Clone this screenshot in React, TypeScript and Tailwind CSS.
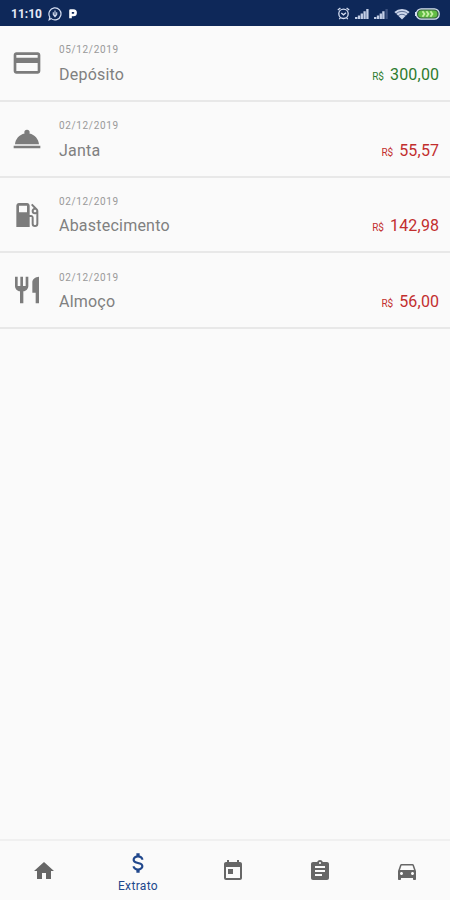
import type { ReactNode } from 'react';
import {
  MdAssignment,
  MdCreditCard,
  MdDirectionsCar,
  MdHome,
  MdLocalGasStation,
  MdRestaurant,
  MdToday,
} from 'react-icons/md';

type Entry = { date: string; label: string; amount: string; income?: boolean; icon: ReactNode };

function Cloche() {
  return (
    <svg width="32" height="32" viewBox="0 0 24 24" fill="currentColor">
      <path d="M2 17h20v2H2v-2M13.84 7.79A2 2 0 0 0 14 7a2 2 0 0 0-4 0c0 .28.06.55.16.79C6.25 8.6 3.27 11.93 3 16h18c-.27-4.07-3.25-7.4-7.16-8.21Z" />
    </svg>
  );
}

function Dollar() {
  return (
    <svg width="26" height="26" viewBox="0 0 24 24" fill="currentColor">
      <path d="M7 15h2c0 1.08 1.37 2 3 2s3-.92 3-2c0-1.1-1.04-1.5-3.24-2.03C9.64 12.44 7 11.78 7 9c0-1.79 1.47-3.31 3.5-3.82V3h3v2.18C15.53 5.69 17 7.21 17 9h-2c0-1.08-1.37-2-3-2s-3 .92-3 2c0 1.1 1.04 1.5 3.24 2.03C14.36 11.56 17 12.22 17 15c0 1.79-1.47 3.31-3.5 3.82V21h-3v-2.18C8.47 18.31 7 16.79 7 15Z" />
    </svg>
  );
}

const entries: Entry[] = [
  { date: '05/12/2019', label: 'Depósito', amount: '300,00', income: true, icon: <MdCreditCard size={32} /> },
  { date: '02/12/2019', label: 'Janta', amount: '55,57', icon: <Cloche /> },
  { date: '02/12/2019', label: 'Abastecimento', amount: '142,98', icon: <MdLocalGasStation size={32} /> },
  { date: '02/12/2019', label: 'Almoço', amount: '56,00', icon: <MdRestaurant size={32} /> },
];

function Signal({ solid, faint }: { solid: string; faint?: string }) {
  return (
    <svg width="14" height="11" viewBox="0 0 14 11" fill="none" strokeWidth="2.3">
      <path d={solid} stroke="#c3cee6" />
      {faint && <path d={faint} stroke="#3d5280" />}
    </svg>
  );
}

function StatusBar() {
  return (
    <header className="flex h-[26px] shrink-0 items-center bg-[#0e2859] pt-px pr-[10px] pl-[11px] text-[#e3e9f6]">
      <span className="w-[32px] text-[12px] leading-none font-bold">11:10</span>
      <svg className="ml-[5px]" width="14" height="14" viewBox="0 0 14 14" fill="none" stroke="#d5def2" strokeWidth="1.2">
        <path d="M3.2 11.6 1.2 12.8 1.8 10A6 6 0 1 1 3.2 11.6Z" />
        <path d="M7 3.5v6M5.3 5.2v2.4L7 9.6l1.7-2V5.2" strokeWidth="1.1" />
      </svg>
      <svg className="ml-[6px]" width="10" height="12" viewBox="0 0 10 12">
        <path d="M2.5 10.3V2.6h2.9a2 2 0 0 1 0 4.4H2.5" fill="none" stroke="#fff" strokeWidth="2.6" strokeLinejoin="round" />
      </svg>
      <div className="ml-auto flex items-center">
        <svg width="13" height="13" viewBox="0 0 13 13" fill="none" stroke="#d5def2" strokeWidth="1.3">
          <circle cx="6.5" cy="6.8" r="4.7" />
          <path d="M.8 3 3.4 1M12.2 3 9.6 1M4.3 6l2.2 1.8L9 5.8M3.3 10.8l-1 1.4M9.7 10.8l1 1.4" />
        </svg>
        <div className="ml-[5px]"><Signal solid="M1.2 11V9M4 11V7.4M6.8 11V5.4M9.6 11V3.2M12.4 11V1" /></div>
        <div className="ml-[5px]"><Signal solid="M1.2 11V9M4 11V7.4M6.8 11V5.4M9.4 11V3.2" faint="M12.6 11V1" /></div>
        <svg className="ml-[6px]" width="16" height="12" viewBox="0 0 16 12">
          <path d="M.4 4.1a11 11 0 0 1 15.2 0L8 11.6Z" fill="#cdd7ec" />
          <path d="M2 5.7a8.8 8.8 0 0 1 12 0M4.2 7.8a5.5 5.5 0 0 1 7.6 0" fill="none" stroke="#0e2859" strokeWidth=".6" />
        </svg>
        <svg className="ml-[5px]" width="25" height="12" viewBox="0 0 25 12">
          <rect x="1.4" y=".8" width="22.8" height="10.4" rx="4.8" fill="#35633e" stroke="#d5def2" strokeWidth="1.2" />
          <path d="M.5 4v4" stroke="#d5def2" />
          <rect x="3.2" y="2.5" width="19" height="7" rx="3.3" fill="#63bd45" />
          <path d="m7.5 3.2 2 2.8-2 2.8M11.5 3.2l2 2.8-2 2.8M15.5 3.2l2 2.8-2 2.8" fill="none" stroke="#c8f0a8" strokeWidth="1.7" />
        </svg>
      </div>
    </header>
  );
}

function Row({ entry }: { entry: Entry }) {
  return (
    <li className="flex h-[75.75px] border-b-2 border-[#e8e8e8] pr-[11px] pl-[11px]">
      <div className="mt-[21px] h-8 w-8 shrink-0 text-[#7c7c7c]">{entry.icon}</div>
      <div className="ml-[16px] flex-1">
        <div className="mt-[18.4px] text-[10px] leading-[12px] tracking-[0.65px] text-[#999]">{entry.date}</div>
        <div className="mt-[8.4px] flex items-baseline justify-between leading-[20px]">
          <span className="text-[16px] tracking-[0.22px] text-[#808080]">{entry.label}</span>
          <span className={`flex items-baseline gap-[6px] ${entry.income ? 'text-[#2d7b2e]' : 'text-[#c22e2e]'}`}>
            <span className="text-[10px]">R$</span>
            <span className="-mr-[0.3px] text-[16px] tracking-[0.2px]">{entry.amount}</span>
          </span>
        </div>
      </div>
    </li>
  );
}

export default function App() {
  return (
    <div className="flex h-[900px] w-[450px] flex-col overflow-hidden bg-[#fafafa] font-['Roboto',sans-serif]">
      <StatusBar />
      <ul className="flex-1">
        {entries.map((entry) => (
          <Row key={entry.label} entry={entry} />
        ))}
      </ul>
      <nav className="grid h-[61px] shrink-0 grid-cols-[87px_103px_87px_86px_87px] items-center border-t-2 border-[#f0f0f0] text-[#666]">
        <div className="flex justify-center pl-px"><MdHome size={24} /></div>
        <div className="flex flex-col items-center pt-px pr-px text-[#20478c]">
          <Dollar />
          <span className="mt-[3px] text-[12px] leading-[14px] tracking-[0.35px]">Extrato</span>
        </div>
        <div className="flex justify-center pr-px"><MdToday size={24} /></div>
        <div className="flex justify-center"><MdAssignment size={24} /></div>
        <div className="flex justify-center pl-px"><MdDirectionsCar size={24} /></div>
      </nav>
    </div>
  );
}
